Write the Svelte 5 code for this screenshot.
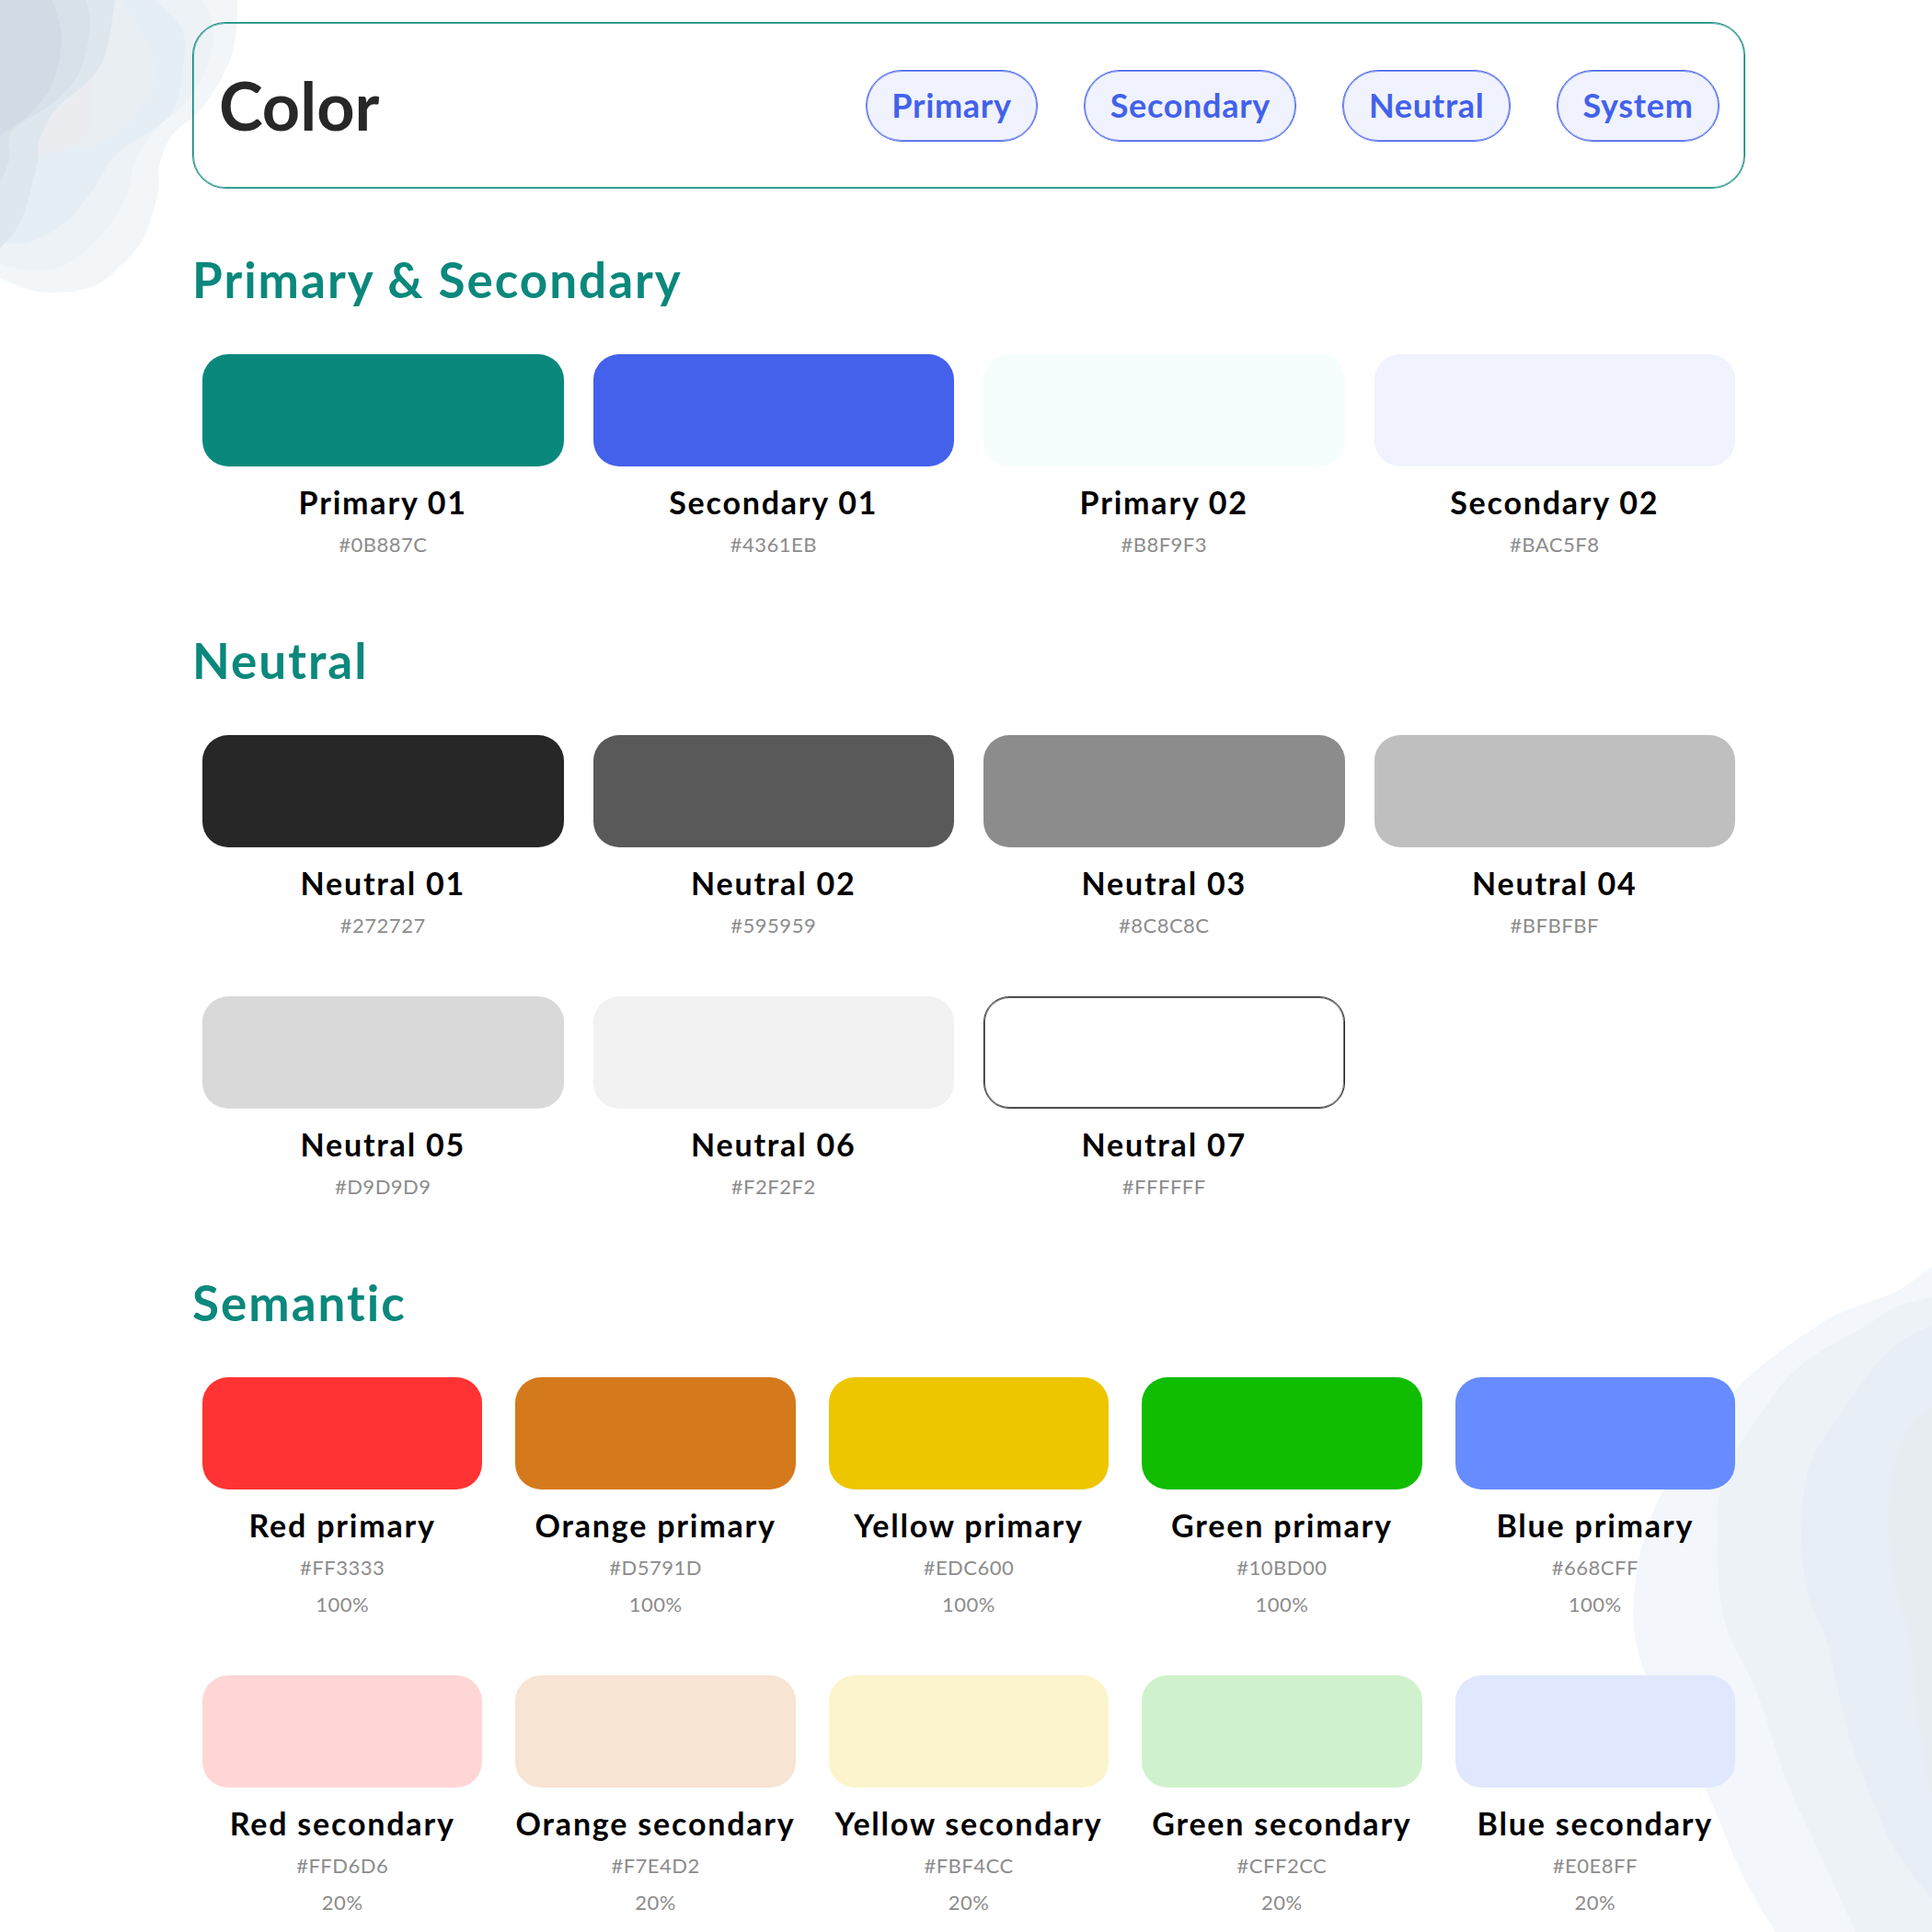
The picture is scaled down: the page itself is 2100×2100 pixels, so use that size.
<script>
    const primary = [
        { name: "Primary 01", hex: "#0B887C", fill: "#0B887C" },
        { name: "Secondary 01", hex: "#4361EB", fill: "#4361EB" },
        { name: "Primary 02", hex: "#B8F9F3", fill: "#F5FEFC" },
        { name: "Secondary 02", hex: "#BAC5F8", fill: "#F0F3FE" }
    ];
    const neutral = [
        { name: "Neutral 01", hex: "#272727" },
        { name: "Neutral 02", hex: "#595959" },
        { name: "Neutral 03", hex: "#8C8C8C" },
        { name: "Neutral 04", hex: "#BFBFBF" },
        { name: "Neutral 05", hex: "#D9D9D9" },
        { name: "Neutral 06", hex: "#F2F2F2" },
        { name: "Neutral 07", hex: "#FFFFFF", outlined: true }
    ];
    const semantic = [
        { name: "Red primary", hex: "#FF3333", pct: "100%" },
        { name: "Orange primary", hex: "#D5791D", pct: "100%" },
        { name: "Yellow primary", hex: "#EDC600", pct: "100%" },
        { name: "Green primary", hex: "#10BD00", pct: "100%" },
        { name: "Blue primary", hex: "#668CFF", pct: "100%" },
        { name: "Red secondary", hex: "#FFD6D6", pct: "20%" },
        { name: "Orange secondary", hex: "#F7E4D2", pct: "20%" },
        { name: "Yellow secondary", hex: "#FBF4CC", pct: "20%" },
        { name: "Green secondary", hex: "#CFF2CC", pct: "20%" },
        { name: "Blue secondary", hex: "#E0E8FF", pct: "20%" }
    ];
    const tabs = ["Primary", "Secondary", "Neutral", "System"];

    // catmull-rom through the traced edge points, closed along the given corner
    function blob(points, corner) {
        let d = `M${points[0][0]} ${points[0][1]}`;
        for (let i = 0; i < points.length - 1; i++) {
            const p0 = points[i - 1] || points[i];
            const p1 = points[i];
            const p2 = points[i + 1];
            const p3 = points[i + 2] || p2;
            const c1 = [p1[0] + (p2[0] - p0[0]) / 6, p1[1] + (p2[1] - p0[1]) / 6];
            const c2 = [p2[0] - (p3[0] - p1[0]) / 6, p2[1] - (p3[1] - p1[1]) / 6];
            d += `C${c1[0]} ${c1[1]} ${c2[0]} ${c2[1]} ${p2[0]} ${p2[1]}`;
        }
        return `${d}L${corner[0]} ${corner[1]}Z`;
    }

    const topLeft = [
        { fill: "#F2F6F9", pts: [[258, 0], [257, 33], [248, 70], [220, 117], [187, 147], [173, 180], [172, 207], [157, 257], [133, 287], [100, 312], [53, 318], [23, 312], [0, 302]] },
        { fill: "#ECF2F6", pts: [[220, 0], [232, 33], [223, 77], [200, 113], [167, 143], [145, 180], [140, 207], [117, 247], [73, 287], [30, 293], [0, 287]] },
        { fill: "#E6EEF5", pts: [[168, 0], [197, 30], [200, 67], [190, 117], [167, 140], [127, 167], [100, 207], [73, 240], [33, 263], [0, 263]] },
        { fill: "#E9EEF2", pts: [[132, 0], [163, 53], [167, 93], [133, 140], [93, 160], [42, 165], [0, 200]] },
        { fill: "#DEE6EE", pts: [[125, 0], [115, 57], [97, 87], [63, 117], [43, 157], [40, 180], [23, 240], [0, 270]] },
        { fill: "#D8E0E9", pts: [[93, 0], [98, 27], [87, 77], [60, 110], [13, 143], [10, 173], [0, 200]] },
        { fill: "#D1DAE5", pts: [[57, 0], [67, 43], [57, 90], [33, 123], [0, 147]] }
    ];
    const blush = [[98, 87], [100, 133], [83, 157], [42, 165], [57, 123], [80, 107], [98, 87]];
    const bottomRight = [
        { fill: "#F3F6FA", pts: [[2100, 1377], [2063, 1403], [2027, 1417], [1977, 1440], [1887, 1510], [1807, 1621], [1777, 1724], [1787, 1817], [1853, 1943], [1893, 2036], [1930, 2100]] },
        { fill: "#EDF2F6", pts: [[2100, 1410], [2060, 1421], [2030, 1440], [1960, 1482], [1920, 1528], [1873, 1607], [1867, 1696], [1877, 1770], [1910, 1840], [1943, 1938], [1977, 2012], [2017, 2100]] },
        { fill: "#E8EEF5", pts: [[2100, 1440], [2053, 1468], [2003, 1533], [1967, 1593], [1958, 1673], [1967, 1738], [1987, 1789], [2010, 1887], [2047, 1985], [2070, 2026], [2100, 2064]] },
        { fill: "#E7ECF1", pts: [[2100, 1528], [2070, 1561], [2053, 1631], [2057, 1705], [2077, 1789], [2087, 1882], [2100, 1952]] }
    ];
</script>

{#snippet swatch(item)}
    <div class="item">
        <div class="chip" class:outlined={item.outlined} style="background: {item.fill || item.hex}"></div>
        <div class="name">{item.name}</div>
        <div class="meta first">{item.hex}</div>
        {#if item.pct}
            <div class="meta">{item.pct}</div>
        {/if}
    </div>
{/snippet}

<svg class="blobs" width="2100" height="2100" viewBox="0 0 2100 2100" aria-hidden="true">
    {#each topLeft as b}
        <path d={blob(b.pts, [0, 0])} fill={b.fill} />
    {/each}
    <path d={blob(blush, blush[0])} fill="#EAECF0" />
    {#each bottomRight as b}
        <path d={blob(b.pts, [2100, 2100])} fill={b.fill} />
    {/each}
</svg>

<main class="page">
    <header class="head">
        <h1>Color</h1>
        <nav class="tabs">
            {#each tabs as tab}
                <span class="tab">{tab}</span>
            {/each}
        </nav>
    </header>

    <section class="first-section">
        <h2>Primary &amp; Secondary</h2>
        <div class="grid four">
            {#each primary as item}
                {@render swatch(item)}
            {/each}
        </div>
    </section>

    <section>
        <h2>Neutral</h2>
        <div class="grid four">
            {#each neutral as item}
                {@render swatch(item)}
            {/each}
        </div>
    </section>

    <section>
        <h2>Semantic</h2>
        <div class="grid five">
            {#each semantic as item}
                {@render swatch(item)}
            {/each}
        </div>
    </section>
</main>

<style>
    :global(body) {
        margin: 0;
        background: #fff;
    }

    .blobs {
        position: absolute;
        top: 0;
        left: 0;
    }

    .page {
        position: relative;
        box-sizing: border-box;
        width: 2100px;
        padding: 24px 203px 12px 209px;
        font-family: "Lato", "Noto Sans", sans-serif;
    }

    /* 1px line plus a faint halo, the source borders sit between 1 and 2px */
    .head {
        display: flex;
        align-items: center;
        justify-content: space-between;
        box-sizing: border-box;
        height: 181px;
        padding: 0 27px 0 28px;
        border: 1px solid #0b887c;
        box-shadow: inset 0 0 0 1px rgba(11, 136, 124, 0.65);
        border-radius: 36px;
    }

    h1 {
        margin: 0 0 2px;
        font-size: 72px;
        font-weight: 700;
        color: #272727;
    }

    .tabs {
        display: flex;
        gap: 50px;
    }

    .tab {
        box-sizing: border-box;
        display: flex;
        align-items: center;
        height: 78px;
        padding: 0 27.5px 2px;
        border: 1px solid #4361eb;
        box-shadow: inset 0 0 0 1px rgba(67, 97, 235, 0.65);
        border-radius: 39px;
        background: #f0f3fe;
        color: #4361eb;
        font-size: 36px;
        font-weight: 700;
        letter-spacing: 0.7px;
    }

    section {
        margin-top: 75px;
        padding: 0 11px;
    }

    .first-section {
        margin-top: 68px;
    }

    h2 {
        margin: 0 -11px 48px;
        height: 64px;
        line-height: 62px;
        font-size: 53px;
        font-weight: 700;
        letter-spacing: 2px;
        color: #0b887c;
    }

    .grid {
        display: grid;
        row-gap: 57px;
    }

    .four {
        grid-template-columns: repeat(4, 1fr);
        column-gap: 32px;
    }

    .five {
        grid-template-columns: repeat(5, 1fr);
        column-gap: 36px;
    }

    .item {
        display: flex;
        flex-direction: column;
        align-items: center;
    }

    .chip {
        box-sizing: border-box;
        width: 100%;
        height: 122px;
        border-radius: 28px;
    }

    .outlined {
        border: 1px solid #272727;
        box-shadow: inset 0 0 0 1px rgba(39, 39, 39, 0.65);
    }

    .name {
        margin-top: 19px;
        line-height: 40px;
        font-size: 34px;
        font-weight: 700;
        letter-spacing: 1.8px;
        color: #000;
        white-space: nowrap;
    }

    .meta {
        line-height: 40px;
        font-size: 22px;
        letter-spacing: 0.5px;
        color: #8c8c8c;
    }

    .first {
        margin-top: 6px;
    }
</style>
